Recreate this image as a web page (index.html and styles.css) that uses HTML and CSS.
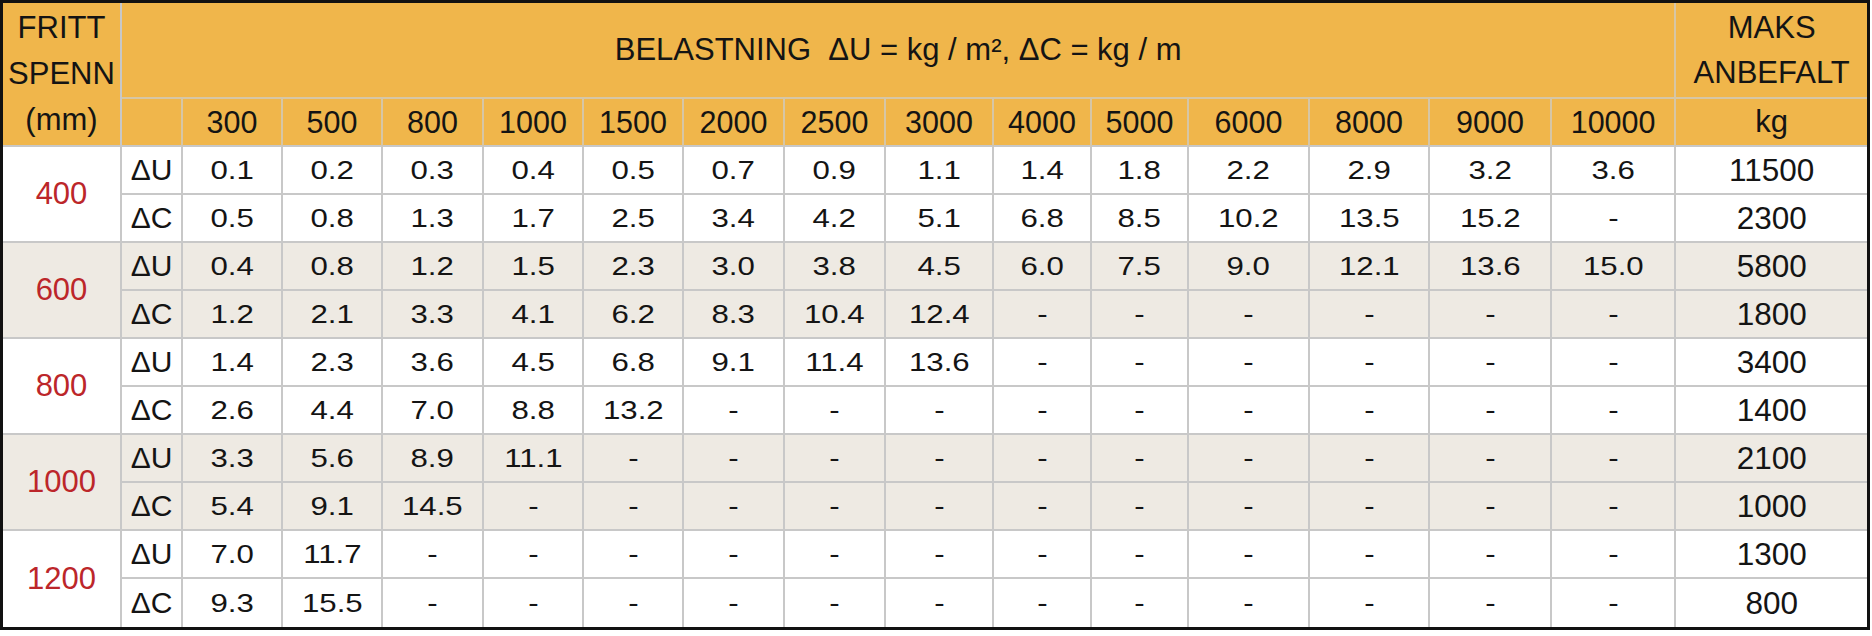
FILE: index.html
```html
<!DOCTYPE html>
<html lang="no">
<head>
<meta charset="utf-8">
<title>Belastningstabell</title>
<link rel="stylesheet" href="styles.css">
</head>
<body>
<div class="frame">
<table class="grid">
<colgroup>
<col class="c-span"><col class="c-sym">
<col class="c100"><col class="c100"><col class="c101"><col class="c100"><col class="c100"><col class="c101"><col class="c101"><col class="c108">
<col class="c98"><col class="c97"><col class="c121"><col class="c120"><col class="c122"><col class="c124">
<col class="c-max">
</colgroup>
<thead>
<tr class="h1">
<th rowspan="2" class="corner">FRITT<br>SPENN<br>(mm)</th>
<th colspan="15" class="title">BELASTNING&nbsp; ΔU = kg / m², ΔC = kg / m</th>
<th class="end maks">MAKS<br>ANBEFALT</th>
</tr>
<tr class="h2">
<th></th><th>300</th><th>500</th><th>800</th><th>1000</th><th>1500</th><th>2000</th><th>2500</th><th>3000</th><th>4000</th><th>5000</th><th>6000</th><th>8000</th><th>9000</th><th>10000</th><th class="end">kg</th>
</tr>
</thead>
<tbody>
<tr class="row">
<th rowspan="2" class="span">400</th><td class="sym">ΔU</td>
<td><span class="v">0.1</span></td><td><span class="v">0.2</span></td><td><span class="v">0.3</span></td><td><span class="v">0.4</span></td><td><span class="v">0.5</span></td><td><span class="v">0.7</span></td><td><span class="v">0.9</span></td><td><span class="v">1.1</span></td><td><span class="v">1.4</span></td><td><span class="v">1.8</span></td><td><span class="v">2.2</span></td><td><span class="v">2.9</span></td><td><span class="v">3.2</span></td><td><span class="v">3.6</span></td>
<td class="end max">11500</td>
</tr>
<tr class="row">
<td class="sym">ΔC</td>
<td><span class="v">0.5</span></td><td><span class="v">0.8</span></td><td><span class="v">1.3</span></td><td><span class="v">1.7</span></td><td><span class="v">2.5</span></td><td><span class="v">3.4</span></td><td><span class="v">4.2</span></td><td><span class="v">5.1</span></td><td><span class="v">6.8</span></td><td><span class="v">8.5</span></td><td><span class="v">10.2</span></td><td><span class="v">13.5</span></td><td><span class="v">15.2</span></td><td><span class="v">-</span></td>
<td class="end max">2300</td>
</tr>
<tr class="row alt">
<th rowspan="2" class="span">600</th><td class="sym">ΔU</td>
<td><span class="v">0.4</span></td><td><span class="v">0.8</span></td><td><span class="v">1.2</span></td><td><span class="v">1.5</span></td><td><span class="v">2.3</span></td><td><span class="v">3.0</span></td><td><span class="v">3.8</span></td><td><span class="v">4.5</span></td><td><span class="v">6.0</span></td><td><span class="v">7.5</span></td><td><span class="v">9.0</span></td><td><span class="v">12.1</span></td><td><span class="v">13.6</span></td><td><span class="v">15.0</span></td>
<td class="end max">5800</td>
</tr>
<tr class="row alt">
<td class="sym">ΔC</td>
<td><span class="v">1.2</span></td><td><span class="v">2.1</span></td><td><span class="v">3.3</span></td><td><span class="v">4.1</span></td><td><span class="v">6.2</span></td><td><span class="v">8.3</span></td><td><span class="v">10.4</span></td><td><span class="v">12.4</span></td><td><span class="v">-</span></td><td><span class="v">-</span></td><td><span class="v">-</span></td><td><span class="v">-</span></td><td><span class="v">-</span></td><td><span class="v">-</span></td>
<td class="end max">1800</td>
</tr>
<tr class="row">
<th rowspan="2" class="span">800</th><td class="sym">ΔU</td>
<td><span class="v">1.4</span></td><td><span class="v">2.3</span></td><td><span class="v">3.6</span></td><td><span class="v">4.5</span></td><td><span class="v">6.8</span></td><td><span class="v">9.1</span></td><td><span class="v">11.4</span></td><td><span class="v">13.6</span></td><td><span class="v">-</span></td><td><span class="v">-</span></td><td><span class="v">-</span></td><td><span class="v">-</span></td><td><span class="v">-</span></td><td><span class="v">-</span></td>
<td class="end max">3400</td>
</tr>
<tr class="row">
<td class="sym">ΔC</td>
<td><span class="v">2.6</span></td><td><span class="v">4.4</span></td><td><span class="v">7.0</span></td><td><span class="v">8.8</span></td><td><span class="v">13.2</span></td><td><span class="v">-</span></td><td><span class="v">-</span></td><td><span class="v">-</span></td><td><span class="v">-</span></td><td><span class="v">-</span></td><td><span class="v">-</span></td><td><span class="v">-</span></td><td><span class="v">-</span></td><td><span class="v">-</span></td>
<td class="end max">1400</td>
</tr>
<tr class="row alt">
<th rowspan="2" class="span">1000</th><td class="sym">ΔU</td>
<td><span class="v">3.3</span></td><td><span class="v">5.6</span></td><td><span class="v">8.9</span></td><td><span class="v">11.1</span></td><td><span class="v">-</span></td><td><span class="v">-</span></td><td><span class="v">-</span></td><td><span class="v">-</span></td><td><span class="v">-</span></td><td><span class="v">-</span></td><td><span class="v">-</span></td><td><span class="v">-</span></td><td><span class="v">-</span></td><td><span class="v">-</span></td>
<td class="end max">2100</td>
</tr>
<tr class="row alt">
<td class="sym">ΔC</td>
<td><span class="v">5.4</span></td><td><span class="v">9.1</span></td><td><span class="v">14.5</span></td><td><span class="v">-</span></td><td><span class="v">-</span></td><td><span class="v">-</span></td><td><span class="v">-</span></td><td><span class="v">-</span></td><td><span class="v">-</span></td><td><span class="v">-</span></td><td><span class="v">-</span></td><td><span class="v">-</span></td><td><span class="v">-</span></td><td><span class="v">-</span></td>
<td class="end max">1000</td>
</tr>
<tr class="row">
<th rowspan="2" class="span bottom">1200</th><td class="sym">ΔU</td>
<td><span class="v">7.0</span></td><td><span class="v">11.7</span></td><td><span class="v">-</span></td><td><span class="v">-</span></td><td><span class="v">-</span></td><td><span class="v">-</span></td><td><span class="v">-</span></td><td><span class="v">-</span></td><td><span class="v">-</span></td><td><span class="v">-</span></td><td><span class="v">-</span></td><td><span class="v">-</span></td><td><span class="v">-</span></td><td><span class="v">-</span></td>
<td class="end max">1300</td>
</tr>
<tr class="row last">
<td class="sym">ΔC</td>
<td><span class="v">9.3</span></td><td><span class="v">15.5</span></td><td><span class="v">-</span></td><td><span class="v">-</span></td><td><span class="v">-</span></td><td><span class="v">-</span></td><td><span class="v">-</span></td><td><span class="v">-</span></td><td><span class="v">-</span></td><td><span class="v">-</span></td><td><span class="v">-</span></td><td><span class="v">-</span></td><td><span class="v">-</span></td><td><span class="v">-</span></td>
<td class="end max">800</td>
</tr>
</tbody>
</table>
</div>
</body>
</html>
```

FILE: styles.css
```css
html, body {
  margin: 0;
  padding: 0;
  background: #ffffff;
}

body {
  font-family: "Liberation Sans", Arial, sans-serif;
  color: #141414;
}

.frame {
  width: 1870px;
  height: 630px;
  box-sizing: border-box;
  border: 3px solid #111111;
  overflow: hidden;
}

.grid {
  width: 1864px;
  border-collapse: separate;
  border-spacing: 0;
  table-layout: fixed;
}

.c-span { width: 119px; }
.c-sym { width: 61px; }
.c100 { width: 100px; }
.c101 { width: 101px; }
.c108 { width: 108px; }
.c98 { width: 98px; }
.c97 { width: 97px; }
.c121 { width: 121px; }
.c120 { width: 120px; }
.c122 { width: 122px; }
.c124 { width: 124px; }
.c-max { width: 191px; }

.grid th,
.grid td {
  padding: 0;
  text-align: center;
  vertical-align: middle;
  font-weight: normal;
  white-space: nowrap;
  overflow: hidden;
  border-right: 2px solid #c8c8c8;
  border-bottom: 2px solid #c8c8c8;
}

.grid .end {
  border-right: none;
}

.grid .last td,
.grid .span.bottom {
  border-bottom: none;
}

.h1 { height: 96px; }
.h2 { height: 48px; }
.row { height: 48px; }

thead th {
  background: #f0b64b;
  font-size: 30.5px;
  line-height: 34px;
  color: #141414;
}

thead .h2 th {
  border-right-color: #d6c6a6;
}

thead .corner {
  font-size: 31px;
  line-height: 46px;
}

thead .title {
  font-size: 31px;
  border-bottom-color: #d6c6a6;
  border-right-color: #d6c6a6;
}

thead .maks {
  font-size: 31px;
  line-height: 45px;
  border-bottom-color: #d6c6a6;
}

thead .h2 .end {
  font-size: 31px;
}

tbody td,
tbody th {
  background: #ffffff;
}

tbody .alt td,
tbody .alt th {
  background: #eeeae3;
}

.span {
  color: #bc262a;
  font-size: 31px;
}

.sym {
  font-size: 30px;
}

.v {
  display: inline-block;
  font-size: 26px;
  transform: scaleX(1.2);
}

.max {
  font-size: 31.5px;
}
```
